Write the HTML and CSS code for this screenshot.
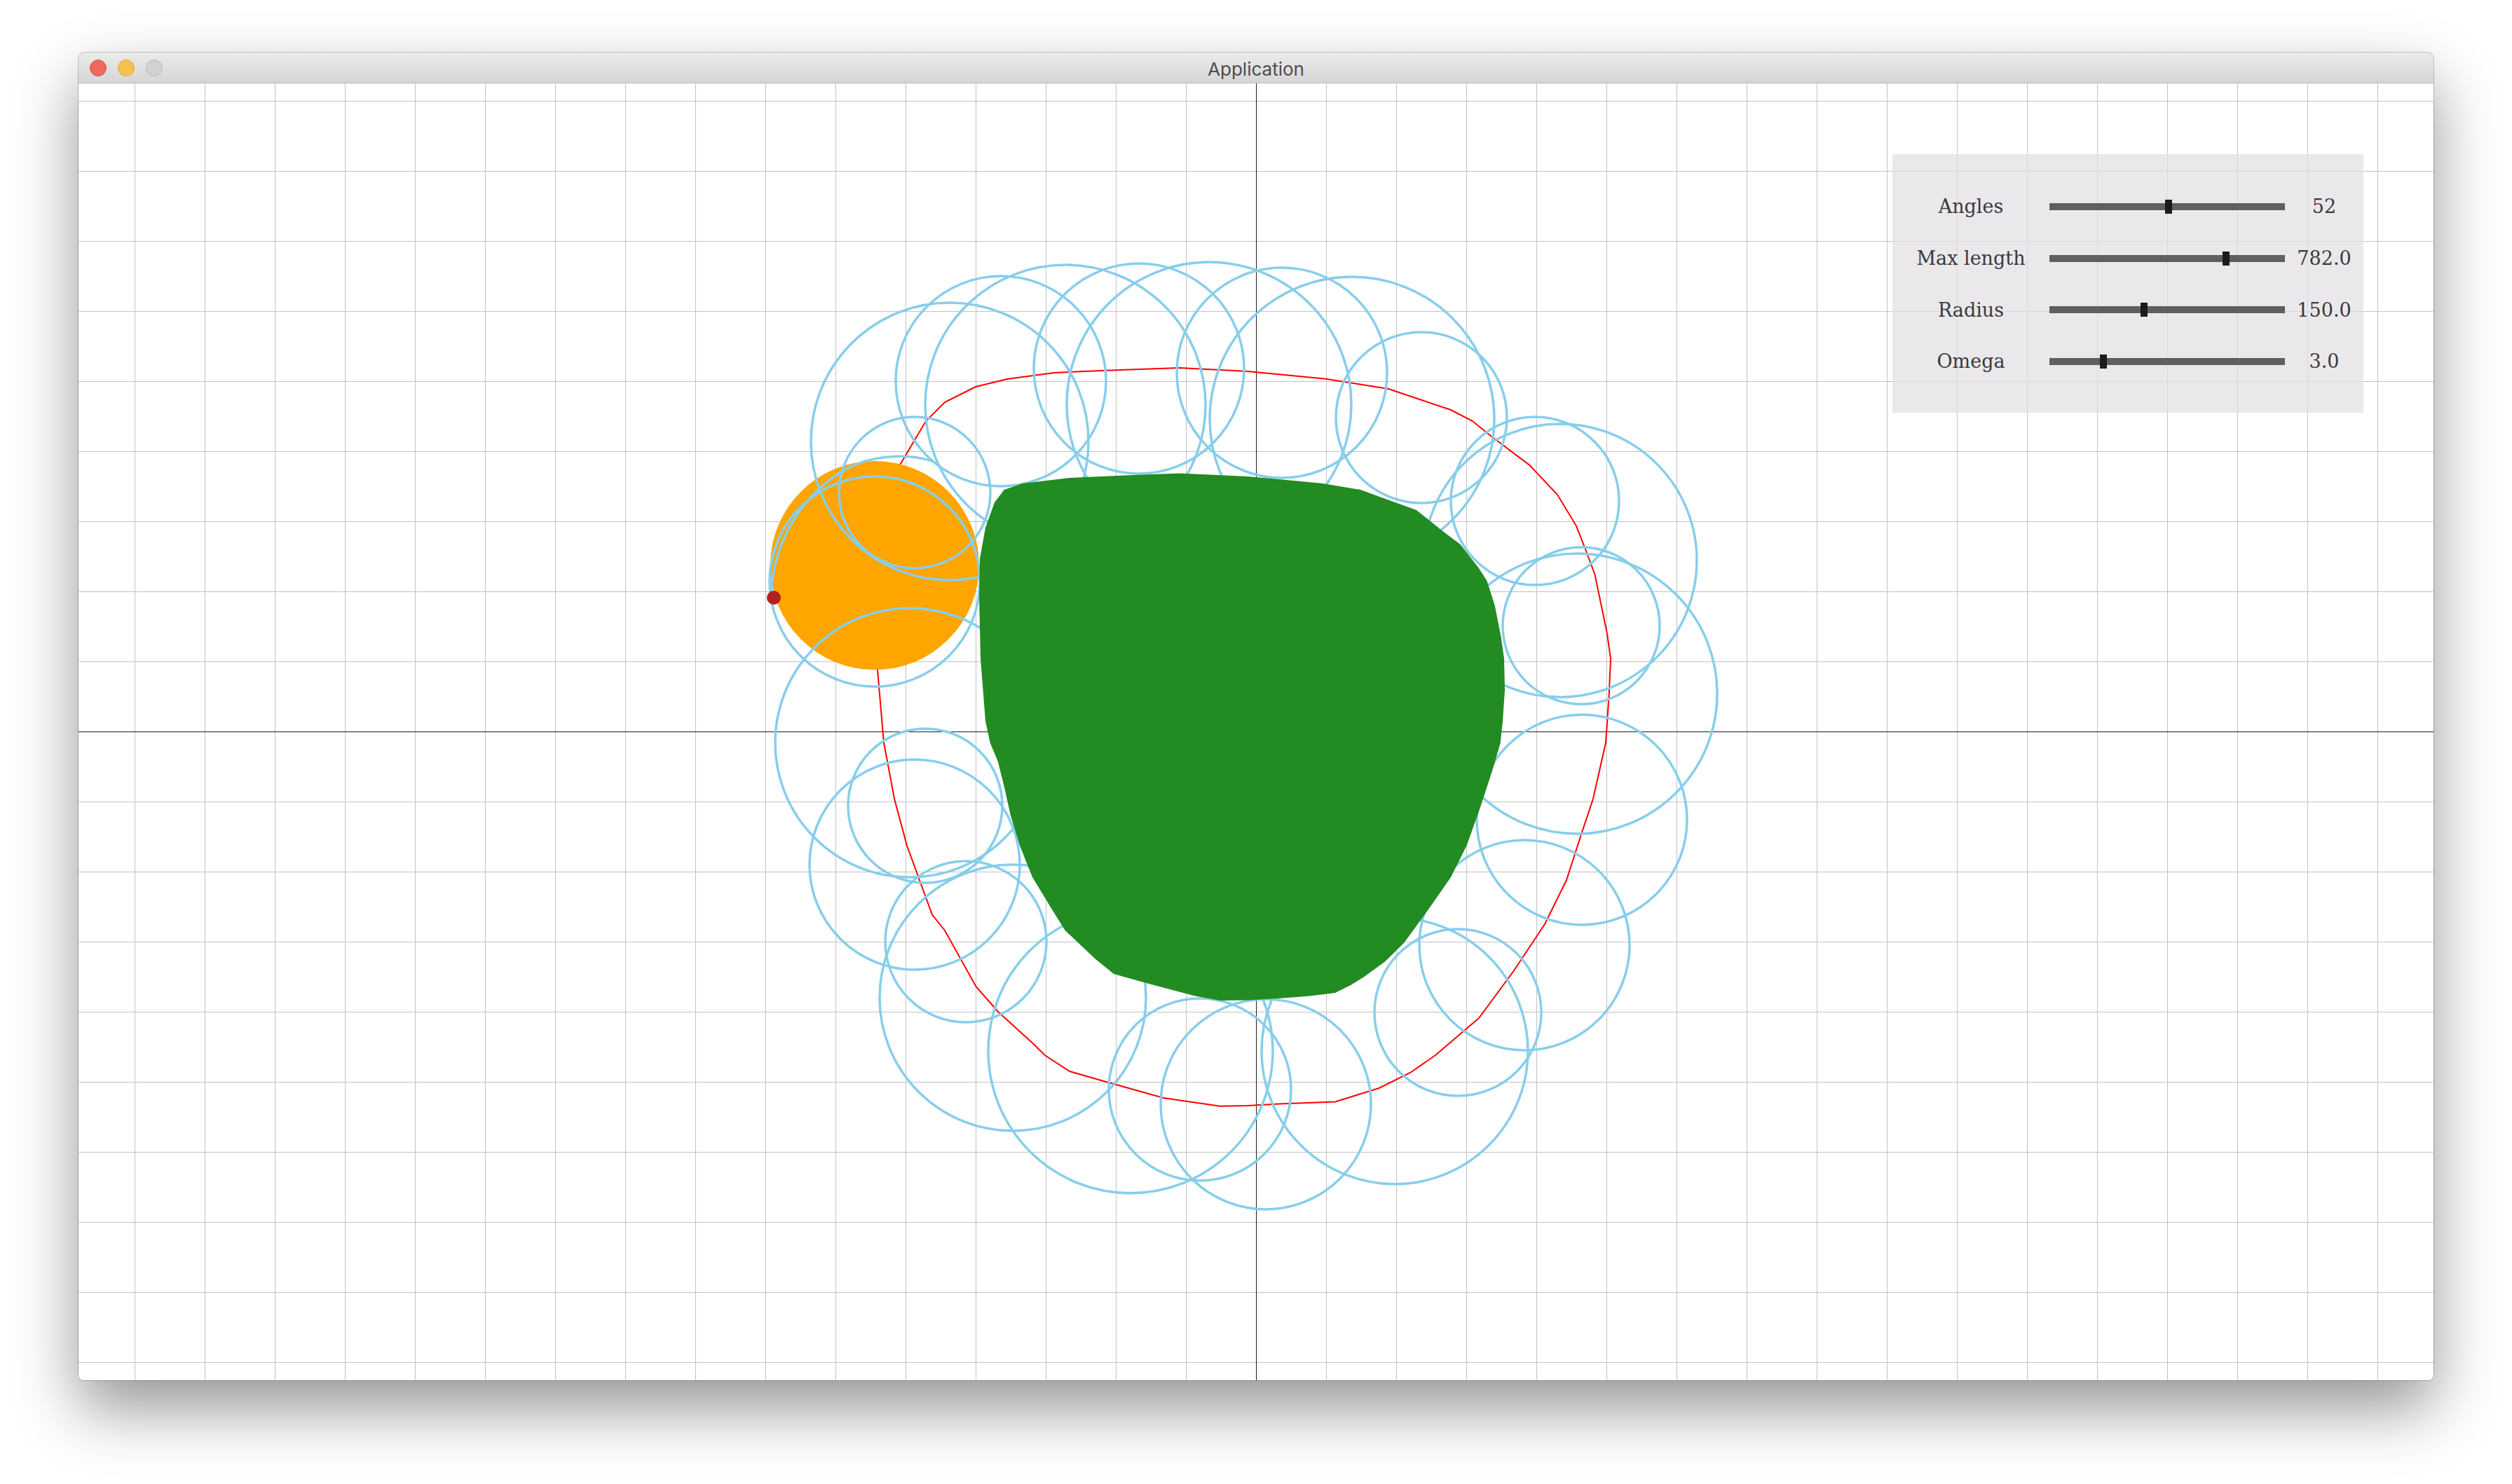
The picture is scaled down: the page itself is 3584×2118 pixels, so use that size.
FILE: index.html
```html
<!DOCTYPE html>
<html>
<head>
<meta charset="utf-8">
<title>Application</title>
<link rel="stylesheet" href="styles.css">
</head>
<body>
<div class="window">
  <div class="titlebar">
    <div class="lights">
      <span class="light red"></span>
      <span class="light yellow"></span>
      <span class="light gray"></span>
    </div>
    <div class="title">Application</div>
  </div>
  <div class="canvas">
    <div class="axis-x"></div>
    <div class="axis-y"></div>
    <svg class="scene" width="3360" height="1851" viewBox="-1680 -925 3360 1851" xmlns="http://www.w3.org/2000/svg">
      <polyline class="path" points="-544,-237 -527,-314 -507.5,-381.3 -471,-443 -444,-470 -400,-492 -355,-503 -288,-512 -221,-515 -109,-519 -12,-514 99.6,-503.2 189,-489 278,-459 309,-443 336,-421 390,-380.4 430,-338 457,-293.4 470,-260 483.5,-224 501,-139.4 506,-104 503.6,-50 499,16 481,96 463,150 443,212 412,275 367.5,342 318,409 256,462 220,487 175.5,509 113,528.5 32.6,531.6 -12,534 -51.3,534.75 -132,523 -221,498 -266,485 -301.3,462 -319,444.6 -368,400 -399.5,364 -444,284 -462,261.5 -498,163 -516,96 -531,16 -540,-88 -544,-237"/>
      <circle class="ball" cx="-544" cy="-237" r="149"/>
      <g class="rings">
        <circle cx="-437" cy="-414" r="198"/>
        <circle cx="-487" cy="-341" r="108"/>
        <circle cx="-364" cy="-500" r="150"/>
        <circle cx="-272" cy="-466" r="200"/>
        <circle cx="-167" cy="-518" r="150"/>
        <circle cx="-67" cy="-467" r="203"/>
        <circle cx="37" cy="-512" r="150"/>
        <circle cx="137" cy="-446" r="203"/>
        <circle cx="236" cy="-448" r="122"/>
        <circle cx="398" cy="-329" r="120"/>
        <circle cx="434" cy="-244" r="195"/>
        <circle cx="464" cy="-151" r="112"/>
        <circle cx="458" cy="-54" r="200"/>
        <circle cx="465" cy="126" r="150"/>
        <circle cx="383" cy="305" r="150"/>
        <circle cx="288" cy="401" r="119"/>
        <circle cx="198" cy="456" r="190"/>
        <circle cx="14" cy="532" r="150"/>
        <circle cx="-80" cy="511" r="130"/>
        <circle cx="-179" cy="456" r="203"/>
        <circle cx="-347" cy="380" r="190"/>
        <circle cx="-414" cy="300" r="115"/>
        <circle cx="-487" cy="190" r="150"/>
        <circle cx="-472" cy="106" r="110"/>
        <circle cx="-494" cy="16" r="192"/>
        <circle cx="-544" cy="-214" r="150"/>
        <path d="M -462,-386 C -500,-398 -560,-395 -600,-365 C -650,-330 -690,-270 -692,-190"/>
      </g>
      <polygon class="blob" points="-359.3,-345 -333,-354 -266,-362 -176,-366 -109,-368.4 -12,-364 32.6,-360 95,-354 149,-345 193,-329 229,-316 265,-287 291.6,-267 318,-233 329.5,-215 340.7,-180 349.6,-135 354,-104 355,-59 352,-14.4 348.7,16 338.4,51.7 327,87 318,114 300.5,163 278,208 247,252.6 211,302 184,328.5 153,351 135,362 113,373 77,377.6 32.6,381 -12,383.4 -51.3,384 -87,377.6 -154,359.75 -203,346 -230,324 -272.3,284 -288,259 -319,208 -337,163 -350.4,118.7 -359.3,78.5 -368.25,42.8 -379.4,16 -386,-14.4 -393,-104 -395,-193 -394,-246.5 -386,-291 -373,-327"/>
      <circle class="dot" cx="-688" cy="-191" r="10"/>
    </svg>
    <div class="panel">
      <div class="row">
        <span class="label">Angles</span>
        <div class="slider"><div class="track"></div><div class="handle" style="left:165px"></div></div>
        <span class="value">52</span>
      </div>
      <div class="row">
        <span class="label">Max length</span>
        <div class="slider"><div class="track"></div><div class="handle" style="left:247px"></div></div>
        <span class="value">782.0</span>
      </div>
      <div class="row">
        <span class="label">Radius</span>
        <div class="slider"><div class="track"></div><div class="handle" style="left:130px"></div></div>
        <span class="value">150.0</span>
      </div>
      <div class="row">
        <span class="label">Omega</span>
        <div class="slider"><div class="track"></div><div class="handle" style="left:72px"></div></div>
        <span class="value">3.0</span>
      </div>
    </div>
  </div>
</div>
</body>
</html>
```

FILE: styles.css
```css
html, body {
  margin: 0;
  padding: 0;
  background: #ffffff;
}
body {
  width: 3584px;
  height: 2118px;
  padding: 75px 0 0 112px;
  box-sizing: border-box;
  overflow: hidden;
}
.window {
  width: 3360px;
  height: 1895px;
  border-radius: 10px 10px 8px 8px;
  box-shadow: 0 40px 90px rgba(0, 0, 0, 0.42), 0 0 0 1px rgba(0, 0, 0, 0.22);
  display: flex;
  flex-direction: column;
  background: #fff;
}
.titlebar {
  height: 44px;
  box-sizing: border-box;
  border-bottom: 1px solid #b9b9b9;
  border-radius: 10px 10px 0 0;
  background: linear-gradient(#ebebeb, #d6d6d6);
  display: flex;
  align-items: center;
  position: relative;
}
.lights {
  display: flex;
  gap: 16px;
  padding-left: 16px;
}
.light {
  width: 24px;
  height: 24px;
  border-radius: 50%;
  box-sizing: border-box;
}
.light.red { background: #ee6a5e; border: 1px solid #d6564b; }
.light.yellow { background: #f5c04f; border: 1px solid #d9a541; }
.light.gray { background: #d1d1d1; border: 1px solid #b7b7b7; }
.title {
  position: absolute;
  left: 0;
  right: 0;
  top: 3px;
  bottom: 0;
  display: flex;
  align-items: center;
  justify-content: center;
  font-family: Inter, "Liberation Sans", sans-serif;
  font-size: 26px;
  color: #4d4d4d;
  pointer-events: none;
}
.canvas {
  position: relative;
  flex: 1;
  background-color: #ffffff;
  background-image:
    linear-gradient(to right, #c2c2c2 1px, transparent 1px),
    linear-gradient(to bottom, #c2c2c2 1px, transparent 1px);
  background-size: 100px 100px;
  background-position: 80px 25px;
  border-radius: 0 0 8px 8px;
  overflow: hidden;
}
.axis-x {
  position: absolute;
  left: 0;
  right: 0;
  top: 925px;
  height: 1px;
  background: #1e1e1e;
}
.axis-y {
  position: absolute;
  top: 0;
  bottom: 0;
  left: 1680px;
  width: 1px;
  background: #1e1e1e;
}
.scene {
  position: absolute;
  left: 0;
  top: 0;
}
.path {
  fill: none;
  stroke: #ff0000;
  stroke-width: 2;
}
.ball { fill: #ffa500; }
.rings circle, .rings path {
  fill: none;
  stroke: #87ceeb;
  stroke-width: 3.5;
}
.blob { fill: #228b22; }
.dot { fill: #b22222; }
.panel {
  position: absolute;
  left: 2588px;
  top: 101px;
  width: 672px;
  height: 369px;
  box-sizing: border-box;
  padding: 38px 0 36px;
  background: rgba(227, 224, 228, 0.74);
  display: flex;
  flex-direction: column;
}
.row {
  height: 73.7px;
  display: grid;
  grid-template-columns: 224px 336px 112px;
  align-items: center;
  font-family: "DejaVu Serif", "Liberation Serif", serif;
  font-size: 27px;
  color: #3a3a3a;
}
.label, .value {
  text-align: center;
  line-height: 1;
}
.slider {
  position: relative;
  height: 20px;
}
.track {
  position: absolute;
  left: 0;
  right: 0;
  top: 5px;
  height: 10px;
  background: #5f5f5f;
}
.handle {
  position: absolute;
  top: 0;
  width: 10px;
  height: 20px;
  background: #1b1b1b;
}
```
